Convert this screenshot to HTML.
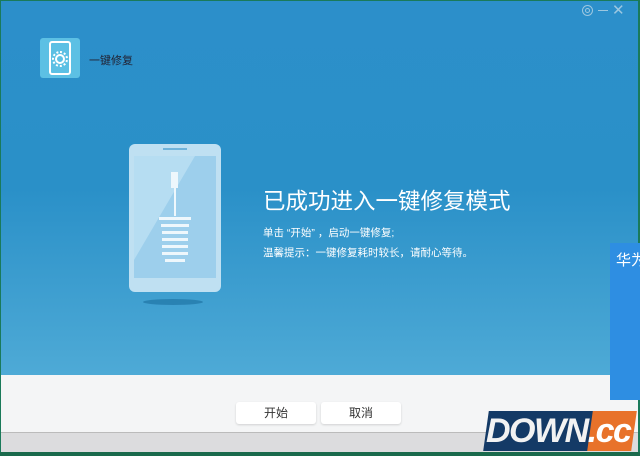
<!DOCTYPE html>
<html><head><meta charset="utf-8"><style>
*{margin:0;padding:0;box-sizing:border-box}
body{width:640px;height:456px;overflow:hidden;position:relative;background:#1a7a5a;font-family:"Liberation Sans","Noto Sans CJK SC",sans-serif}
#main{position:absolute;left:1px;top:1px;width:637px;height:374px;background:linear-gradient(#2c8fca 0%,#2a90c8 50%,#4eaad6 100%)}
#white{position:absolute;left:1px;top:375px;width:637px;height:57px;background:#f4f5f6}
#gray{position:absolute;left:1px;top:432px;width:637px;height:20px;background:#dcdcde;border-top:1px solid #bbb}
.btn{position:absolute;top:402px;width:80px;height:22px;background:#fff;border-radius:3px;box-shadow:0 1px 2px rgba(0,0,0,.15);font-size:12px;color:#333;text-align:center;line-height:22px}
.t{position:absolute;color:#fff;white-space:nowrap}
</style></head><body>
<div id="main"></div>
<div id="white"></div>
<div id="gray"></div>
<div style="position:absolute;left:40px;top:38px;width:40px;height:40px;background:#5cc0e4;border-radius:3px"></div>
<div style="position:absolute;left:49px;top:41px;width:22px;height:34px;border:2px solid #fff;border-radius:3px"></div>
<div style="position:absolute;left:52px;top:51px;width:16px;height:16px;border:2px dotted #fff;border-radius:50%"></div>
<div style="position:absolute;left:55px;top:54px;width:10px;height:10px;border:2px solid #fff;border-radius:50%"></div>
<div class="t" style="left:89px;top:52px;font-size:11px;color:#223">一键修复</div>
<div style="position:absolute;left:582px;top:5px;width:11px;height:11px;border:1px solid #9cc7e0;border-radius:50%"></div>
<div style="position:absolute;left:585px;top:8px;width:5px;height:5px;border:1px solid #9cc7e0;border-radius:50%"></div>
<div style="position:absolute;left:598px;top:10px;width:10px;height:1px;background:#9cc7e0"></div>
<div class="t" style="left:612px;top:1px;font-size:15px;color:#9cc7e0">✕</div>
<svg style="position:absolute;left:125px;top:140px" width="100" height="170">
<ellipse cx="48" cy="162" rx="30" ry="3" fill="#1b6e9e" opacity=".6"/>
<rect x="4" y="4" width="92" height="148" rx="6" fill="#bfe0f2"/>
<rect x="9" y="16" width="82" height="122" fill="#9dcfec"/>
<polygon points="9,16 70,16 9,120" fill="#b6ddf2"/>
<rect x="38" y="8" width="24" height="2" fill="#6fb3da"/>
<rect x="46" y="32" width="7" height="16" fill="#eef7fc"/>
<rect x="49" y="48" width="2" height="28" fill="#eef7fc"/>
<g fill="#eef7fc"><rect x="34" y="77" width="32" height="3"/><rect x="36" y="84" width="28" height="3"/><rect x="37" y="91" width="26" height="3"/><rect x="37" y="98" width="26" height="3"/><rect x="37" y="105" width="26" height="3"/><rect x="37" y="112" width="26" height="3"/><rect x="40" y="119" width="20" height="3"/></g>
</svg>
<div class="t" style="left:263px;top:184px;font-size:22.5px">已成功进入一键修复模式</div>
<div class="t" style="left:263px;top:225px;font-size:10.5px">单击 “开始” ，启动一键修复;</div>
<div class="t" style="left:263px;top:245px;font-size:10.5px">温馨提示：一键修复耗时较长，请耐心等待。</div>
<div style="position:absolute;left:610px;top:243px;width:30px;height:157px;background:#2e8ee2"></div>
<div class="t" style="left:616px;top:249px;font-size:15px">华为</div>
<div class="btn" style="left:236px">开始</div>
<div class="btn" style="left:321px">取消</div>
<div style="position:absolute;left:0;top:452px;width:640px;height:4px;background:#1a6a4c"></div>
<div style="position:absolute;left:486px;top:411px;width:106px;height:40px;background:#143a66;transform:skewX(-8deg)"></div>
<div style="position:absolute;left:590px;top:411px;width:44px;height:40px;background:#e8722a;transform:skewX(-8deg)"></div>
<div class="t" style="left:486px;top:411px;font-size:34px;line-height:40px;font-weight:bold;font-style:italic;color:#f2f2f2;letter-spacing:-1.5px">DOWN<span style="color:#fff">.cc</span></div>
</body></html>
